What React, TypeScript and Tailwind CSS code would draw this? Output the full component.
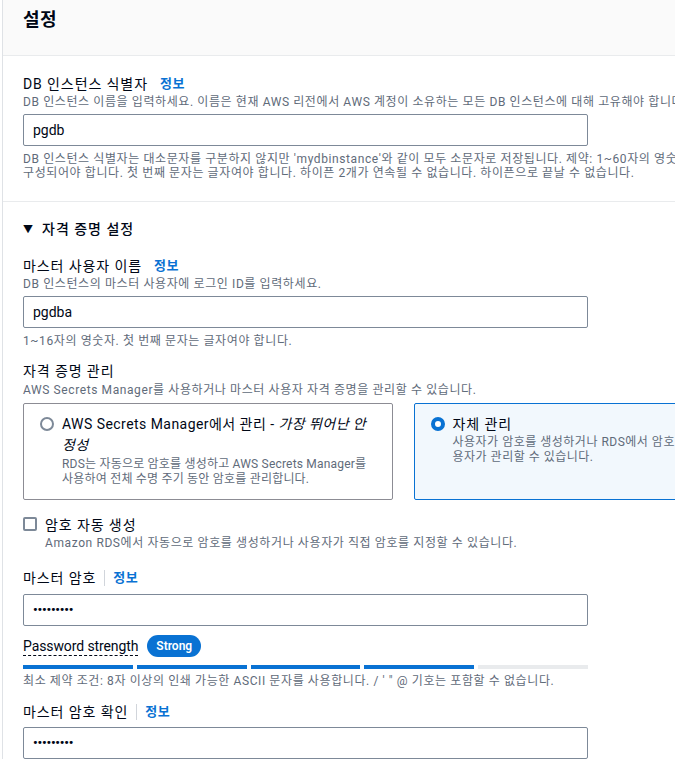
import { ReactNode } from 'react';

const font = { fontFamily: 'Roboto, "Noto Sans CJK KR", sans-serif' };

function Info() {
  return <span className="text-[13px] font-bold tracking-[0.5px] text-[#0972d3]">정보</span>;
}

function Label({ children, divider }: { children: ReactNode; divider?: boolean }) {
  return (
    <div className="flex h-[20px] items-center whitespace-nowrap text-[14px] leading-[20px] text-[#000716]">
      <span className="tracking-[0.9px]">{children}</span>
      {divider ? <span className="mx-[8px] h-[16px] w-px bg-[#d1d5db]" /> : <span className="w-[12px]" />}
      <Info />
    </div>
  );
}

function Desc({ children, className = '' }: { children: ReactNode; className?: string }) {
  return <p className={`whitespace-nowrap text-[12px] leading-[16px] tracking-[0.6px] text-[#5f6b7a] ${className}`}>{children}</p>;
}

function Input({ value, password }: { value: string; password?: boolean }) {
  return (
    <div className="flex h-[32px] w-[565px] items-center rounded-[2px] border border-[#7d8998] bg-white px-[9px] text-[14px] text-[#000716]">
      {password ? <span className="text-[13px] font-bold tracking-[-0.2px]">•••••••••</span> : value}
    </div>
  );
}

export default function App() {
  const bars = ['bg-[#0972d3]', 'bg-[#0972d3]', 'bg-[#0972d3]', 'bg-[#0972d3]', 'bg-[#e9ebed]'];

  return (
    <div className="h-[761px] w-[675px] overflow-hidden bg-white" style={font}>
      <div className="ml-[2px] w-[820px] border-l border-[#dfe2e6]">
        <div className="h-[56px] border-b border-[#e9ebed] bg-[#fafafa] px-[20px] pt-[7px]">
          <h2 className="text-[18px] font-bold leading-[26px] tracking-[0.5px] text-[#000716]">설정</h2>
        </div>

        <div className="border-b border-[#e9ebed] px-[20px] pb-[21px] pt-[18px]">
          <Label>DB 인스턴스 식별자</Label>
          <Desc>DB 인스턴스 이름을 입력하세요. 이름은 현재 AWS 리전에서 AWS 계정이 소유하는 모든 DB 인스턴스에 대해 고유해야 합니다.</Desc>
          <div className="mt-[4px]">
            <Input value="pgdb" />
          </div>
          <div className="mt-[6px] text-[12px] leading-[14px] tracking-[0.6px] text-[#5f6b7a]">
            <p className="whitespace-nowrap">DB 인스턴스 식별자는 대소문자를 구분하지 않지만 'mydbinstance'와 같이 모두 소문자로 저장됩니다. 제약: 1~60자의 영숫자 또는 하이픈으로</p>
            <p className="whitespace-nowrap">구성되어야 합니다. 첫 번째 문자는 글자여야 합니다. 하이픈 2개가 연속될 수 없습니다. 하이픈으로 끝날 수 없습니다.</p>
          </div>
        </div>

        <div className="px-[20px] pt-[17px]">
          <div className="flex h-[20px] items-center gap-[9px] text-[14px] font-medium text-[#000716]">
            <span className="text-[10px]">▼</span>
            <span className="tracking-[1px]">자격 증명 설정</span>
          </div>

          <div className="mt-[17px]">
            <Label>마스터 사용자 이름</Label>
            <Desc>DB 인스턴스의 마스터 사용자에 로그인 ID를 입력하세요.</Desc>
            <div className="mt-[4px]">
              <Input value="pgdba" />
            </div>
            <Desc className="mt-[5px]">1~16자의 영숫자. 첫 번째 문자는 글자여야 합니다.</Desc>
          </div>

          <div className="mt-[12px]">
            <div className="h-[20px] text-[14px] leading-[20px] tracking-[0.9px] text-[#000716]">자격 증명 관리</div>
            <Desc className="mt-[1px]">AWS Secrets Manager를 사용하거나 마스터 사용자 자격 증명을 관리할 수 있습니다.</Desc>
            <div className="mt-[5px] grid w-[760px] grid-cols-2 gap-[21px]">
              <div className="flex h-[97px] gap-[8px] rounded-[2px] border border-[#8c8c94] pl-[16px] pr-[20px] pt-[10px]">
                <span className="mt-[3px] h-[14px] w-[14px] shrink-0 rounded-full border-2 border-[#7d8998] bg-white" />
                <div className="break-all">
                  <p className="text-[14px] leading-[21px] tracking-[0.45px] text-[#000716]">
                    AWS Secrets Manager에서 관리 - <i>가장 뛰어난 안정성</i>
                  </p>
                  <p className="mt-[1px] text-[12px] leading-[15px] tracking-[0.2px] text-[#5f6b7a]">
                    RDS는 자동으로 암호를 생성하고 AWS Secrets Manager를 사용하여 전체 수명 주기 동안 암호를 관리합니다.
                  </p>
                </div>
              </div>
              <div className="flex h-[97px] gap-[8px] rounded-[2px] border border-[#0972d3] bg-[#f2f8fd] pl-[16px] pr-[22px] pt-[10px]">
                <span className="mt-[3px] h-[14px] w-[14px] shrink-0 rounded-full border-[4px] border-[#0972d3] bg-white" />
                <div className="break-all">
                  <p className="text-[14px] leading-[21px] tracking-[0.9px] text-[#000716]">자체 관리</p>
                  <p className="text-[12px] leading-[15px] tracking-[0.5px] text-[#5f6b7a]">
                    사용자가 암호를 생성하거나 RDS에서 암호를 생성하고 사용자가 관리할 수 있습니다.
                  </p>
                </div>
              </div>
            </div>
          </div>

          <div className="mt-[15px] flex gap-[8px]">
            <span className="mt-[2px] h-[14px] w-[14px] shrink-0 rounded-[2px] border-2 border-[#7d8998] bg-white" />
            <div>
              <div className="h-[20px] text-[14px] leading-[20px] tracking-[0.9px] text-[#000716]">암호 자동 생성</div>
              <Desc>Amazon RDS에서 자동으로 암호를 생성하거나 사용자가 직접 암호를 지정할 수 있습니다.</Desc>
            </div>
          </div>

          <div className="mt-[17px]">
            <Label divider>마스터 암호</Label>
            <div className="mt-[6px]">
              <Input value="" password />
            </div>
            <div className="mt-[9px] flex h-[22px] items-center gap-[9px]">
              <span className="border-b border-dashed border-[#000716] text-[14px] leading-[18px] tracking-[-0.1px] text-[#000716]">Password strength</span>
              <span className="flex h-[22px] items-center rounded-full bg-[#0972d3] px-[9px] text-[12px] font-semibold text-white">Strong</span>
            </div>
            <div className="mt-[8px] flex w-[565px] gap-[4px]">
              {bars.map((bar, index) => (
                <span key={index} className={`h-[4px] flex-1 ${bar}`} />
              ))}
            </div>
            <Desc className="mt-[4px]">최소 제약 조건: 8자 이상의 인쇄 가능한 ASCII 문자를 사용합니다. / ' " @ 기호는 포함할 수 없습니다.</Desc>
          </div>

          <div className="mt-[13px]">
            <Label divider>마스터 암호 확인</Label>
            <div className="mt-[5px]">
              <Input value="" password />
            </div>
          </div>
        </div>
      </div>
    </div>
  );
}
